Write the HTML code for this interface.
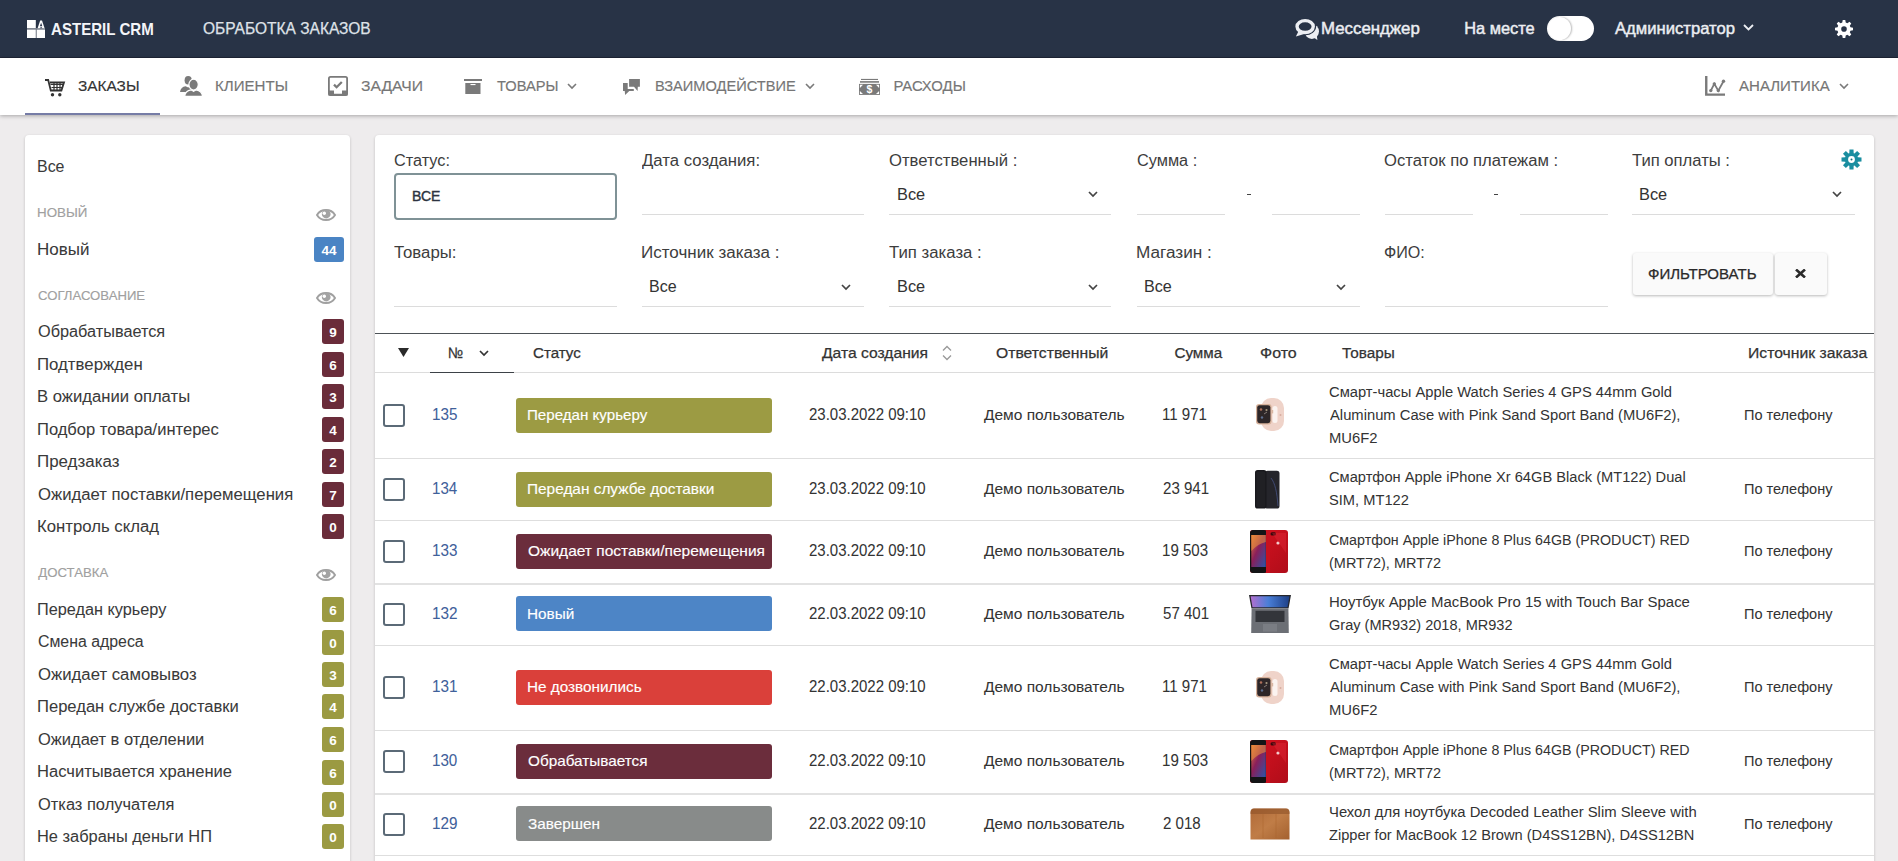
<!DOCTYPE html>
<html><head><meta charset="utf-8"><title>Asteril CRM</title>
<style>
html,body{margin:0;padding:0;}
body{width:1898px;height:861px;overflow:hidden;position:relative;background:#eeeced;font-family:"Liberation Sans", sans-serif;}
.t{position:absolute;white-space:nowrap;}
svg{display:block}
</style></head><body>
<div style="position:absolute;left:0px;top:0px;width:1898px;height:58px;background:#283346;border-bottom:1px solid #1f2536;box-sizing:border-box"></div>
<svg style="position:absolute;left:27px;top:20px" width="18" height="18" viewBox="0 0 18 18"><rect x="0" y="0" width="8.8" height="8.2" fill="#fff"/><rect x="0" y="8.2" width="18" height="1.4" fill="#8d929c"/><rect x="8.8" y="9.6" width="1" height="8.4" fill="#8d929c"/><rect x="0" y="9.6" width="8.8" height="8.4" fill="#fff"/><rect x="9.8" y="9.6" width="8.2" height="8.4" fill="#fff"/><path d="M10.6 8.2 L13.2 0.6 L15.0 0.6 L17.6 8.2 Z" fill="#fff"/><path d="M14.1 2.8 L12.9 6.2 L15.3 6.2 Z M12.6 8.2 L14.1 6.9 L15.6 8.2Z" fill="#283249"/></svg>
<div class="t" style="left:51.22px;top:19.22px;font-size:16.40px;line-height:20px;font-weight:700;color:#f4f5f8;transform:scaleX(0.9201);transform-origin:0 0;">ASTERIL CRM</div>
<div class="t" style="left:202.90px;top:19.03px;font-size:15.80px;line-height:20px;font-weight:400;color:#dfe2e8;transform:scaleX(0.9822);transform-origin:0 0;-webkit-text-stroke:0.25px #dfe2e8;">ОБРАБОТКА ЗАКАЗОВ</div>
<svg style="position:absolute;left:1295px;top:18px" width="25" height="23" viewBox="0 0 25 23"><ellipse cx="16.8" cy="13.6" rx="7.2" ry="7.4" fill="#eceef2"/><path d="M18 19L22.4 22L21.6 15.5Z" fill="#eceef2"/><ellipse cx="10.15" cy="8.55" rx="11.0" ry="8.75" fill="#283346"/><ellipse cx="10.15" cy="8.55" rx="8.1" ry="5.95" fill="#283346" stroke="#eceef2" stroke-width="3.4"/><path d="M3.4 13.4L0.9 18.6L9.2 15.9Z" fill="#eceef2"/></svg>
<div class="t" style="left:1321.15px;top:18.12px;font-size:16.40px;line-height:20px;font-weight:400;color:#eceef2;transform:scaleX(1.0267);transform-origin:0 0;-webkit-text-stroke:0.45px #eceef2;">Мессенджер</div>
<div class="t" style="left:1464.19px;top:18.12px;font-size:16.40px;line-height:20px;font-weight:400;color:#eceef2;-webkit-text-stroke:0.45px #eceef2;">На месте</div>
<div style="position:absolute;left:1547px;top:16px;width:47px;height:25px;background:#fff;border-radius:13px"></div>
<div style="position:absolute;left:1548px;top:17px;width:23px;height:23px;background:#fff;border-radius:50%;box-shadow:1px 0 2px rgba(0,0,0,.28)"></div>
<div class="t" style="left:1614.60px;top:18.12px;font-size:16.40px;line-height:20px;font-weight:400;color:#eceef2;transform:scaleX(1.0147);transform-origin:0 0;-webkit-text-stroke:0.45px #eceef2;">Администратор</div>
<svg style="position:absolute;left:1743px;top:24px" width="11" height="7" viewBox="0 0 11 7"><path d="M1 1l4.5 4.5L10 1" fill="none" stroke="#eceef2" stroke-width="1.8"/></svg>
<svg style="position:absolute;left:1834px;top:19px" width="20" height="20" viewBox="0 0 20 20"><path d="M8.27 3.53 L8.73 0.99 L11.27 0.99 L11.73 3.53 L13.35 4.20 L15.48 2.73 L17.27 4.52 L15.80 6.65 L16.47 8.27 L19.01 8.73 L19.01 11.27 L16.47 11.73 L15.80 13.35 L17.27 15.48 L15.48 17.27 L13.35 15.80 L11.73 16.47 L11.27 19.01 L8.73 19.01 L8.27 16.47 L6.65 15.80 L4.52 17.27 L2.73 15.48 L4.20 13.35 L3.53 11.73 L0.99 11.27 L0.99 8.73 L3.53 8.27 L4.20 6.65 L2.73 4.52 L4.52 2.73 L6.65 4.20Z M7.20 10.00a2.8 2.8 0 1 0 5.60 0a2.8 2.8 0 1 0 -5.60 0Z" fill="#fff" fill-rule="evenodd"/></svg>
<div style="position:absolute;left:0px;top:58px;width:1898px;height:57px;background:#fff;box-shadow:0 1px 4px rgba(0,0,0,.3)"></div>
<div style="position:absolute;left:25px;top:113px;width:135px;height:2px;background:#767ca6"></div>
<svg style="position:absolute;left:45px;top:79px" width="21" height="18" viewBox="0 0 21 18"><path d="M0 1h3.2l2.6 10.5h10.6l2.6-8H5" fill="none" stroke="#333" stroke-width="1.8"/><path d="M5.5 5.5h13M6.5 8.5h11M9 3.5v8M12 3.5v8M15 3.5v8" stroke="#333" stroke-width="1.2"/><circle cx="7.5" cy="15.8" r="1.7" fill="#333"/><circle cx="14.8" cy="15.8" r="1.7" fill="#333"/></svg>
<div class="t" style="left:78.46px;top:77.14px;font-size:14.90px;line-height:19px;font-weight:400;color:#333;transform:scaleX(1.0331);transform-origin:0 0;-webkit-text-stroke:0.15px #333;">ЗАКАЗЫ</div>
<svg style="position:absolute;left:179px;top:75px" width="24" height="22" viewBox="0 0 24 22"><ellipse cx="9.2" cy="5.2" rx="3.6" ry="4.3" fill="#7a7a7a"/><path d="M1 17c.4-3.6 2.6-5.3 5.6-5.8l2.6 1.4 2.4-1.3c1 .2 1.8.5 2.4.9L10 17z" fill="#7a7a7a"/><ellipse cx="14.6" cy="9.6" rx="4.7" ry="5.4" fill="#7a7a7a" stroke="#fff" stroke-width="1.2"/><path d="M5.6 21.4c.5-4.2 3-6 6.4-6.6l2.6 1.6 2.6-1.6c3.4.6 5.9 2.4 6.4 6.6z" fill="#7a7a7a" stroke="#fff" stroke-width="1.2"/></svg>
<div class="t" style="left:215.09px;top:77.14px;font-size:14.90px;line-height:19px;font-weight:400;color:#767676;transform:scaleX(1.0128);transform-origin:0 0;-webkit-text-stroke:0.15px #767676;">КЛИЕНТЫ</div>
<svg style="position:absolute;left:328px;top:76px" width="20" height="20" viewBox="0 0 20 20"><rect x="0.9" y="0.9" width="18.2" height="18.2" rx="1.6" fill="none" stroke="#7a7a7a" stroke-width="1.8"/><path d="M0.5 14.6H6v3.2h8v-3.2h5.5V19.5H0.5z" fill="#7a7a7a"/><path d="M6 8.6l2.6 2.6 5.2-5.2" fill="none" stroke="#7a7a7a" stroke-width="2.3"/></svg>
<div class="t" style="left:361.25px;top:77.14px;font-size:14.90px;line-height:19px;font-weight:400;color:#767676;transform:scaleX(1.0522);transform-origin:0 0;-webkit-text-stroke:0.15px #767676;">ЗАДАЧИ</div>
<svg style="position:absolute;left:464px;top:79px" width="18" height="15" viewBox="0 0 18 15"><rect x="0" y="0" width="18" height="2" fill="#7a7a7a"/><rect x="1.3" y="4" width="15.2" height="11" fill="#7a7a7a"/><rect x="6.5" y="5" width="5" height="1.1" fill="#fff"/></svg>
<div class="t" style="left:496.71px;top:77.14px;font-size:14.90px;line-height:19px;font-weight:400;color:#767676;transform:scaleX(0.9834);transform-origin:0 0;-webkit-text-stroke:0.15px #767676;">ТОВАРЫ</div>
<svg style="position:absolute;left:567px;top:83px" width="10" height="7" viewBox="0 0 10 7"><path d="M1 1l4 4 4-4" fill="none" stroke="#7a7a7a" stroke-width="1.6"/></svg>
<svg style="position:absolute;left:622px;top:78px" width="19" height="17" viewBox="0 0 19 17"><path d="M7.1 1.06H17.9V8.7H15.8L15.6 12.9L12 8.7H7.1Z" fill="#7a7a7a"/><path d="M1 5H5.7V11H11.8V12.9H7.3L3.1 16.9L2.75 12.9H1Z" fill="#7a7a7a"/></svg>
<div class="t" style="left:654.63px;top:77.14px;font-size:14.90px;line-height:19px;font-weight:400;color:#767676;transform:scaleX(0.9815);transform-origin:0 0;-webkit-text-stroke:0.15px #767676;">ВЗАИМОДЕЙСТВИЕ</div>
<svg style="position:absolute;left:805px;top:83px" width="10" height="7" viewBox="0 0 10 7"><path d="M1 1l4 4 4-4" fill="none" stroke="#7a7a7a" stroke-width="1.6"/></svg>
<svg style="position:absolute;left:858px;top:78px" width="22" height="17" viewBox="0 0 22 17"><rect x="3" y="0.9" width="17" height="1.1" fill="#7a7a7a"/><rect x="2" y="3.1" width="19" height="1.6" fill="#7a7a7a"/><rect x="1" y="5.9" width="21" height="11" fill="#7a7a7a"/><path d="M1.9 6.8H5L1.9 9.9ZM21.1 6.8H18L21.1 9.9ZM1.9 16H5L1.9 12.9ZM21.1 16H18L21.1 12.9Z" fill="#fff"/><text x="11.5" y="15.3" font-size="10.5" font-weight="700" text-anchor="middle" fill="#fff" font-family="Liberation Sans">$</text></svg>
<div class="t" style="left:893.41px;top:77.14px;font-size:14.90px;line-height:19px;font-weight:400;color:#767676;-webkit-text-stroke:0.15px #767676;">РАСХОДЫ</div>
<svg style="position:absolute;left:1705px;top:75px" width="21" height="21" viewBox="0 0 21 21"><path d="M1.25 1V19.6H20" fill="none" stroke="#7a7a7a" stroke-width="2.4"/><path d="M5.8 15.6L9.3 8.9L13.3 15.6L18.5 6.3" fill="none" stroke="#7a7a7a" stroke-width="1.8"/><circle cx="5.8" cy="15.6" r="1.7" fill="#7a7a7a"/><circle cx="9.3" cy="8.9" r="1.7" fill="#7a7a7a"/><circle cx="13.3" cy="15.6" r="1.7" fill="#7a7a7a"/><circle cx="18.5" cy="6.3" r="1.7" fill="#7a7a7a"/></svg>
<div class="t" style="left:1739.00px;top:77.14px;font-size:14.90px;line-height:19px;font-weight:400;color:#767676;transform:scaleX(1.0095);transform-origin:0 0;-webkit-text-stroke:0.15px #767676;">АНАЛИТИКА</div>
<svg style="position:absolute;left:1839px;top:83px" width="10" height="7" viewBox="0 0 10 7"><path d="M1 1l4 4 4-4" fill="none" stroke="#7a7a7a" stroke-width="1.6"/></svg>
<div style="position:absolute;left:25px;top:135px;width:325px;height:760px;background:#fff;border-radius:4px;box-shadow:0 1px 3px rgba(0,0,0,.2)"></div>
<div class="t" style="left:37.12px;top:156.93px;font-size:15.80px;line-height:20px;font-weight:400;color:#3a3a3a;transform:scaleX(1.0087);transform-origin:0 0;-webkit-text-stroke:0.05px #3a3a3a;">Все</div>
<div class="t" style="left:37.33px;top:204.83px;font-size:13.20px;line-height:16px;font-weight:400;color:#a0a0a0;transform:scaleX(1.0115);transform-origin:0 0;-webkit-text-stroke:0.15px #a0a0a0;">НОВЫЙ</div>
<svg style="position:absolute;left:316px;top:209.0px" width="20" height="12" viewBox="0 0 20 12"><path d="M1 6C3.2 2.2 6.4 1 10 1s6.8 1.2 9 5c-2.2 3.8-5.4 5-9 5s-6.8-1.2-9-5z" fill="#fff" stroke="#a0a0a0" stroke-width="1.9"/><circle cx="10.2" cy="5.0" r="4.4" fill="#a3a3a3"/><circle cx="8.3" cy="4.3" r="1.7" fill="#fff"/></svg>
<div class="t" style="left:37.74px;top:287.63px;font-size:13.20px;line-height:16px;font-weight:400;color:#a0a0a0;transform:scaleX(0.9963);transform-origin:0 0;-webkit-text-stroke:0.15px #a0a0a0;">СОГЛАСОВАНИЕ</div>
<svg style="position:absolute;left:316px;top:291.8px" width="20" height="12" viewBox="0 0 20 12"><path d="M1 6C3.2 2.2 6.4 1 10 1s6.8 1.2 9 5c-2.2 3.8-5.4 5-9 5s-6.8-1.2-9-5z" fill="#fff" stroke="#a0a0a0" stroke-width="1.9"/><circle cx="10.2" cy="5.0" r="4.4" fill="#a3a3a3"/><circle cx="8.3" cy="4.3" r="1.7" fill="#fff"/></svg>
<div class="t" style="left:38.33px;top:564.73px;font-size:13.20px;line-height:16px;font-weight:400;color:#a0a0a0;-webkit-text-stroke:0.15px #a0a0a0;">ДОСТАВКА</div>
<svg style="position:absolute;left:316px;top:568.9px" width="20" height="12" viewBox="0 0 20 12"><path d="M1 6C3.2 2.2 6.4 1 10 1s6.8 1.2 9 5c-2.2 3.8-5.4 5-9 5s-6.8-1.2-9-5z" fill="#fff" stroke="#a0a0a0" stroke-width="1.9"/><circle cx="10.2" cy="5.0" r="4.4" fill="#a3a3a3"/><circle cx="8.3" cy="4.3" r="1.7" fill="#fff"/></svg>
<div class="t" style="left:37.04px;top:239.83px;font-size:15.80px;line-height:20px;font-weight:400;color:#3a3a3a;transform:scaleX(1.0742);transform-origin:0 0;-webkit-text-stroke:0.05px #3a3a3a;">Новый</div>
<div style="position:absolute;left:314px;top:237px;width:30px;height:25px;background:#4a84c4;border-radius:3px"></div>
<div class="t" style="left:314px;top:237.6px;width:30px;height:25px;line-height:25px;text-align:center;font-size:13.5px;font-weight:700;color:#fff">44</div>
<div class="t" style="left:37.67px;top:322.03px;font-size:15.80px;line-height:20px;font-weight:400;color:#3a3a3a;transform:scaleX(1.0307);transform-origin:0 0;-webkit-text-stroke:0.05px #3a3a3a;">Обрабатывается</div>
<div style="position:absolute;left:322px;top:319px;width:22px;height:25px;background:#6a2c3a;border-radius:3px"></div>
<div class="t" style="left:322px;top:319.6px;width:22px;height:25px;line-height:25px;text-align:center;font-size:13.5px;font-weight:700;color:#fff">9</div>
<div class="t" style="left:37.06px;top:354.53px;font-size:15.80px;line-height:20px;font-weight:400;color:#3a3a3a;transform:scaleX(1.0638);transform-origin:0 0;-webkit-text-stroke:0.05px #3a3a3a;">Подтвержден</div>
<div style="position:absolute;left:322px;top:352px;width:22px;height:25px;background:#6a2c3a;border-radius:3px"></div>
<div class="t" style="left:322px;top:352.6px;width:22px;height:25px;line-height:25px;text-align:center;font-size:13.5px;font-weight:700;color:#fff">6</div>
<div class="t" style="left:37.07px;top:387.03px;font-size:15.80px;line-height:20px;font-weight:400;color:#3a3a3a;transform:scaleX(1.0539);transform-origin:0 0;-webkit-text-stroke:0.05px #3a3a3a;">В ожидании оплаты</div>
<div style="position:absolute;left:322px;top:384px;width:22px;height:25px;background:#6a2c3a;border-radius:3px"></div>
<div class="t" style="left:322px;top:384.6px;width:22px;height:25px;line-height:25px;text-align:center;font-size:13.5px;font-weight:700;color:#fff">3</div>
<div class="t" style="left:37.08px;top:419.53px;font-size:15.80px;line-height:20px;font-weight:400;color:#3a3a3a;transform:scaleX(1.0467);transform-origin:0 0;-webkit-text-stroke:0.05px #3a3a3a;">Подбор товара/интерес</div>
<div style="position:absolute;left:322px;top:417px;width:22px;height:25px;background:#6a2c3a;border-radius:3px"></div>
<div class="t" style="left:322px;top:417.6px;width:22px;height:25px;line-height:25px;text-align:center;font-size:13.5px;font-weight:700;color:#fff">4</div>
<div class="t" style="left:37.05px;top:452.03px;font-size:15.80px;line-height:20px;font-weight:400;color:#3a3a3a;transform:scaleX(1.0713);transform-origin:0 0;-webkit-text-stroke:0.05px #3a3a3a;">Предзаказ</div>
<div style="position:absolute;left:322px;top:449px;width:22px;height:25px;background:#6a2c3a;border-radius:3px"></div>
<div class="t" style="left:322px;top:449.6px;width:22px;height:25px;line-height:25px;text-align:center;font-size:13.5px;font-weight:700;color:#fff">2</div>
<div class="t" style="left:37.65px;top:484.53px;font-size:15.80px;line-height:20px;font-weight:400;color:#3a3a3a;transform:scaleX(1.0572);transform-origin:0 0;-webkit-text-stroke:0.05px #3a3a3a;">Ожидает поставки/перемещения</div>
<div style="position:absolute;left:322px;top:482px;width:22px;height:25px;background:#6a2c3a;border-radius:3px"></div>
<div class="t" style="left:322px;top:482.6px;width:22px;height:25px;line-height:25px;text-align:center;font-size:13.5px;font-weight:700;color:#fff">7</div>
<div class="t" style="left:37.06px;top:517.03px;font-size:15.80px;line-height:20px;font-weight:400;color:#3a3a3a;transform:scaleX(1.0584);transform-origin:0 0;-webkit-text-stroke:0.05px #3a3a3a;">Контроль склад</div>
<div style="position:absolute;left:322px;top:514px;width:22px;height:25px;background:#6a2c3a;border-radius:3px"></div>
<div class="t" style="left:322px;top:514.6px;width:22px;height:25px;line-height:25px;text-align:center;font-size:13.5px;font-weight:700;color:#fff">0</div>
<div class="t" style="left:37.10px;top:599.83px;font-size:15.80px;line-height:20px;font-weight:400;color:#3a3a3a;transform:scaleX(1.0294);transform-origin:0 0;-webkit-text-stroke:0.05px #3a3a3a;">Передан курьеру</div>
<div style="position:absolute;left:322px;top:597px;width:22px;height:25px;background:#9b9a42;border-radius:3px"></div>
<div class="t" style="left:322px;top:597.6px;width:22px;height:25px;line-height:25px;text-align:center;font-size:13.5px;font-weight:700;color:#fff">6</div>
<div class="t" style="left:37.61px;top:632.33px;font-size:15.80px;line-height:20px;font-weight:400;color:#3a3a3a;transform:scaleX(1.0044);transform-origin:0 0;-webkit-text-stroke:0.05px #3a3a3a;">Смена адреса</div>
<div style="position:absolute;left:322px;top:630px;width:22px;height:25px;background:#9b9a42;border-radius:3px"></div>
<div class="t" style="left:322px;top:630.6px;width:22px;height:25px;line-height:25px;text-align:center;font-size:13.5px;font-weight:700;color:#fff">0</div>
<div class="t" style="left:37.65px;top:664.83px;font-size:15.80px;line-height:20px;font-weight:400;color:#3a3a3a;transform:scaleX(1.0597);transform-origin:0 0;-webkit-text-stroke:0.05px #3a3a3a;">Ожидает самовывоз</div>
<div style="position:absolute;left:322px;top:662px;width:22px;height:25px;background:#9b9a42;border-radius:3px"></div>
<div class="t" style="left:322px;top:662.6px;width:22px;height:25px;line-height:25px;text-align:center;font-size:13.5px;font-weight:700;color:#fff">3</div>
<div class="t" style="left:37.07px;top:697.33px;font-size:15.80px;line-height:20px;font-weight:400;color:#3a3a3a;transform:scaleX(1.0495);transform-origin:0 0;-webkit-text-stroke:0.05px #3a3a3a;">Передан службе доставки</div>
<div style="position:absolute;left:322px;top:694px;width:22px;height:25px;background:#9b9a42;border-radius:3px"></div>
<div class="t" style="left:322px;top:694.6px;width:22px;height:25px;line-height:25px;text-align:center;font-size:13.5px;font-weight:700;color:#fff">4</div>
<div class="t" style="left:37.66px;top:729.83px;font-size:15.80px;line-height:20px;font-weight:400;color:#3a3a3a;transform:scaleX(1.0437);transform-origin:0 0;-webkit-text-stroke:0.05px #3a3a3a;">Ожидает в отделении</div>
<div style="position:absolute;left:322px;top:727px;width:22px;height:25px;background:#9b9a42;border-radius:3px"></div>
<div class="t" style="left:322px;top:727.6px;width:22px;height:25px;line-height:25px;text-align:center;font-size:13.5px;font-weight:700;color:#fff">6</div>
<div class="t" style="left:37.08px;top:762.33px;font-size:15.80px;line-height:20px;font-weight:400;color:#3a3a3a;transform:scaleX(1.0481);transform-origin:0 0;-webkit-text-stroke:0.05px #3a3a3a;">Насчитывается хранение</div>
<div style="position:absolute;left:322px;top:760px;width:22px;height:25px;background:#9b9a42;border-radius:3px"></div>
<div class="t" style="left:322px;top:760.6px;width:22px;height:25px;line-height:25px;text-align:center;font-size:13.5px;font-weight:700;color:#fff">6</div>
<div class="t" style="left:37.66px;top:794.83px;font-size:15.80px;line-height:20px;font-weight:400;color:#3a3a3a;transform:scaleX(1.0413);transform-origin:0 0;-webkit-text-stroke:0.05px #3a3a3a;">Отказ получателя</div>
<div style="position:absolute;left:322px;top:792px;width:22px;height:25px;background:#9b9a42;border-radius:3px"></div>
<div class="t" style="left:322px;top:792.6px;width:22px;height:25px;line-height:25px;text-align:center;font-size:13.5px;font-weight:700;color:#fff">0</div>
<div class="t" style="left:37.09px;top:827.33px;font-size:15.80px;line-height:20px;font-weight:400;color:#3a3a3a;transform:scaleX(1.0392);transform-origin:0 0;-webkit-text-stroke:0.05px #3a3a3a;">Не забраны деньги НП</div>
<div style="position:absolute;left:322px;top:824px;width:22px;height:25px;background:#9b9a42;border-radius:3px"></div>
<div class="t" style="left:322px;top:824.6px;width:22px;height:25px;line-height:25px;text-align:center;font-size:13.5px;font-weight:700;color:#fff">0</div>
<div style="position:absolute;left:375px;top:135px;width:1499px;height:760px;background:#fff;border-radius:4px;box-shadow:0 1px 3px rgba(0,0,0,.2)"></div>
<div class="t" style="left:393.79px;top:150.83px;font-size:15.80px;line-height:20px;font-weight:400;color:#3d3d3d;transform:scaleX(1.0299);transform-origin:0 0;">Статус:</div>
<div style="position:absolute;left:394px;top:173px;width:223px;height:47px;box-sizing:border-box;border:2px solid #7f9296;border-radius:4px"></div>
<div class="t" style="left:412.18px;top:186.58px;font-size:14.20px;line-height:18px;font-weight:400;color:#2c3340;transform:scaleX(0.9896);transform-origin:0 0;-webkit-text-stroke:0.4px #2c3340;">ВСЕ</div>
<div class="t" style="left:641.92px;top:151.33px;font-size:15.80px;line-height:20px;font-weight:400;color:#3d3d3d;transform:scaleX(1.0594);transform-origin:0 0;">Дата создания:</div>
<div style="position:absolute;left:642px;top:214px;width:222px;height:1px;background:#dcdcdc"></div>
<div class="t" style="left:889.05px;top:151.33px;font-size:15.80px;line-height:20px;font-weight:400;color:#3d3d3d;transform:scaleX(1.0558);transform-origin:0 0;">Ответственный :</div>
<div class="t" style="left:896.50px;top:184.99px;font-size:15.60px;line-height:20px;font-weight:400;color:#333;transform:scaleX(1.0457);transform-origin:0 0;-webkit-text-stroke:0.05px #333;">Все</div>
<svg style="position:absolute;left:1088px;top:191px" width="10" height="7" viewBox="0 0 10 7"><path d="M1 1l4 4 4-4" fill="none" stroke="#444" stroke-width="1.7"/></svg>
<div style="position:absolute;left:889px;top:214px;width:222px;height:1px;background:#dcdcdc"></div>
<div class="t" style="left:1136.69px;top:151.33px;font-size:15.80px;line-height:20px;font-weight:400;color:#3d3d3d;transform:scaleX(1.0311);transform-origin:0 0;">Сумма :</div>
<div style="position:absolute;left:1137px;top:214px;width:88px;height:1px;background:#dcdcdc"></div>
<div style="position:absolute;left:1272px;top:214px;width:88px;height:1px;background:#dcdcdc"></div>
<div style="position:absolute;left:1247px;top:194px;width:4px;height:1px;background:#444"></div>
<div class="t" style="left:1384.45px;top:151.33px;font-size:15.80px;line-height:20px;font-weight:400;color:#3d3d3d;transform:scaleX(1.0528);transform-origin:0 0;">Остаток по платежам :</div>
<div style="position:absolute;left:1385px;top:214px;width:88px;height:1px;background:#dcdcdc"></div>
<div style="position:absolute;left:1520px;top:214px;width:88px;height:1px;background:#dcdcdc"></div>
<div style="position:absolute;left:1494px;top:194px;width:4px;height:1px;background:#444"></div>
<div class="t" style="left:1632.47px;top:151.33px;font-size:15.80px;line-height:20px;font-weight:400;color:#3d3d3d;transform:scaleX(1.0525);transform-origin:0 0;">Тип оплаты :</div>
<div class="t" style="left:1639.39px;top:184.99px;font-size:15.60px;line-height:20px;font-weight:400;color:#333;transform:scaleX(1.0457);transform-origin:0 0;-webkit-text-stroke:0.05px #333;">Все</div>
<svg style="position:absolute;left:1832px;top:191px" width="10" height="7" viewBox="0 0 10 7"><path d="M1 1l4 4 4-4" fill="none" stroke="#444" stroke-width="1.7"/></svg>
<div style="position:absolute;left:1632px;top:214px;width:223px;height:1px;background:#dcdcdc"></div>
<svg style="position:absolute;left:1841px;top:149px" width="21" height="21" viewBox="0 0 21 21"><path d="M8.32 4.17 L8.47 0.50 L12.53 0.50 L12.68 4.17 L13.44 4.48 L16.13 1.99 L19.01 4.87 L16.52 7.56 L16.83 8.32 L20.50 8.47 L20.50 12.53 L16.83 12.68 L16.52 13.44 L19.01 16.13 L16.13 19.01 L13.44 16.52 L12.68 16.83 L12.53 20.50 L8.47 20.50 L8.32 16.83 L7.56 16.52 L4.87 19.01 L1.99 16.13 L4.48 13.44 L4.17 12.68 L0.50 12.53 L0.50 8.47 L4.17 8.32 L4.48 7.56 L1.99 4.87 L4.87 1.99 L7.56 4.48Z M7.10 10.50a3.4 3.4 0 1 0 6.80 0a3.4 3.4 0 1 0 -6.80 0Z" fill="#1a8ea0" fill-rule="evenodd"/><circle cx="10.5" cy="10.5" r="1" fill="#1a6f7c"/></svg>
<div class="t" style="left:394.26px;top:242.53px;font-size:15.80px;line-height:20px;font-weight:400;color:#3d3d3d;transform:scaleX(1.0642);transform-origin:0 0;">Товары:</div>
<div style="position:absolute;left:394px;top:306px;width:223px;height:1px;background:#dcdcdc"></div>
<div class="t" style="left:640.64px;top:242.53px;font-size:15.80px;line-height:20px;font-weight:400;color:#3d3d3d;transform:scaleX(1.0776);transform-origin:0 0;">Источник заказа :</div>
<div class="t" style="left:648.72px;top:276.89px;font-size:15.60px;line-height:20px;font-weight:400;color:#333;transform:scaleX(1.0256);transform-origin:0 0;-webkit-text-stroke:0.05px #333;">Все</div>
<svg style="position:absolute;left:841px;top:284px" width="10" height="7" viewBox="0 0 10 7"><path d="M1 1l4 4 4-4" fill="none" stroke="#444" stroke-width="1.7"/></svg>
<div style="position:absolute;left:642px;top:306px;width:222px;height:1px;background:#dcdcdc"></div>
<div class="t" style="left:889.46px;top:242.53px;font-size:15.80px;line-height:20px;font-weight:400;color:#3d3d3d;transform:scaleX(1.0605);transform-origin:0 0;">Тип заказа :</div>
<div class="t" style="left:896.50px;top:276.89px;font-size:15.60px;line-height:20px;font-weight:400;color:#333;transform:scaleX(1.0457);transform-origin:0 0;-webkit-text-stroke:0.05px #333;">Все</div>
<svg style="position:absolute;left:1088px;top:284px" width="10" height="7" viewBox="0 0 10 7"><path d="M1 1l4 4 4-4" fill="none" stroke="#444" stroke-width="1.7"/></svg>
<div style="position:absolute;left:889px;top:306px;width:222px;height:1px;background:#dcdcdc"></div>
<div class="t" style="left:1135.82px;top:242.73px;font-size:15.80px;line-height:20px;font-weight:400;color:#3d3d3d;transform:scaleX(1.0884);transform-origin:0 0;">Магазин :</div>
<div class="t" style="left:1144.11px;top:276.89px;font-size:15.60px;line-height:20px;font-weight:400;color:#333;transform:scaleX(1.0337);transform-origin:0 0;-webkit-text-stroke:0.05px #333;">Все</div>
<svg style="position:absolute;left:1336px;top:284px" width="10" height="7" viewBox="0 0 10 7"><path d="M1 1l4 4 4-4" fill="none" stroke="#444" stroke-width="1.7"/></svg>
<div style="position:absolute;left:1137px;top:306px;width:223px;height:1px;background:#dcdcdc"></div>
<div class="t" style="left:1384.31px;top:242.53px;font-size:15.80px;line-height:20px;font-weight:400;color:#3d3d3d;transform:scaleX(1.0195);transform-origin:0 0;">ФИО:</div>
<div style="position:absolute;left:1385px;top:306px;width:223px;height:1px;background:#dcdcdc"></div>
<div style="position:absolute;left:1633px;top:253px;width:140px;height:42px;background:#fafafa;border-radius:3px;box-shadow:0 1px 3px rgba(0,0,0,.28)"></div>
<div class="t" style="left:1648.37px;top:264.61px;font-size:14.40px;line-height:18px;font-weight:400;color:#2a2a2a;transform:scaleX(1.0451);transform-origin:0 0;-webkit-text-stroke:0.25px #2a2a2a;">ФИЛЬТРОВАТЬ</div>
<div style="position:absolute;left:1775px;top:253px;width:52px;height:42px;background:#fafafa;border-radius:3px;box-shadow:0 1px 3px rgba(0,0,0,.28)"></div>
<svg style="position:absolute;left:1795px;top:269px" width="11" height="9" viewBox="0 0 11 9"><path d="M1 0.5l9 8M10 0.5l-9 8" stroke="#2a2a2a" stroke-width="2.6"/></svg>
<div style="position:absolute;left:375px;top:333px;width:1499px;height:1px;background:#4d5257"></div>
<div style="position:absolute;left:375px;top:372px;width:1499px;height:1px;background:#dcdcdc"></div>
<div style="position:absolute;left:430px;top:372px;width:84px;height:1px;background:#3d4247"></div>
<svg style="position:absolute;left:398px;top:348px" width="11" height="9" viewBox="0 0 11 9"><path d="M0 0h11L5.5 9z" fill="#2a2a2a"/></svg>
<div class="t" style="left:448.41px;top:343.13px;font-size:15.20px;line-height:19px;font-weight:400;color:#333;transform:scaleX(0.9429);transform-origin:0 0;-webkit-text-stroke:0.25px #333;">№</div>
<svg style="position:absolute;left:479px;top:350px" width="10" height="7" viewBox="0 0 10 7"><path d="M1 1l4 4 4-4" fill="none" stroke="#333" stroke-width="1.7"/></svg>
<div class="t" style="left:532.54px;top:343.43px;font-size:15.20px;line-height:19px;font-weight:400;color:#333;transform:scaleX(0.9959);transform-origin:0 0;-webkit-text-stroke:0.25px #333;">Статус</div>
<div class="t" style="left:821.92px;top:343.43px;font-size:15.20px;line-height:19px;font-weight:400;color:#333;transform:scaleX(1.0303);transform-origin:0 0;-webkit-text-stroke:0.25px #333;">Дата создания</div>
<svg style="position:absolute;left:942px;top:345px" width="10" height="16" viewBox="0 0 10 16"><path d="M1 5.5l4-4 4 4M1 10.5l4 4 4-4" fill="none" stroke="#999" stroke-width="1.3"/></svg>
<div class="t" style="left:996.09px;top:343.43px;font-size:15.20px;line-height:19px;font-weight:400;color:#333;transform:scaleX(1.0350);transform-origin:0 0;-webkit-text-stroke:0.25px #333;">Ответственный</div>
<div class="t" style="left:1174.44px;top:343.43px;font-size:15.20px;line-height:19px;font-weight:400;color:#333;-webkit-text-stroke:0.25px #333;">Сумма</div>
<div class="t" style="left:1259.62px;top:343.43px;font-size:15.20px;line-height:19px;font-weight:400;color:#333;transform:scaleX(1.0526);transform-origin:0 0;-webkit-text-stroke:0.25px #333;">Фото</div>
<div class="t" style="left:1342.09px;top:343.43px;font-size:15.20px;line-height:19px;font-weight:400;color:#333;transform:scaleX(1.0094);transform-origin:0 0;-webkit-text-stroke:0.25px #333;">Товары</div>
<div class="t" style="left:1747.74px;top:343.43px;font-size:15.20px;line-height:19px;font-weight:400;color:#333;transform:scaleX(1.0351);transform-origin:0 0;-webkit-text-stroke:0.25px #333;">Источник заказа</div>
<svg width="0" height="0" style="position:absolute"><defs><linearGradient id="gw" x1="0" y1="0" x2="1" y2="1"><stop offset="0" stop-color="#e8793a"/><stop offset=".45" stop-color="#8a1f5a"/><stop offset="1" stop-color="#2a55a8"/></linearGradient><linearGradient id="gm" x1="0" y1="0" x2="1" y2="0"><stop offset="0" stop-color="#b36fd0"/><stop offset=".45" stop-color="#4a7fd8"/><stop offset="1" stop-color="#1d3f86"/></linearGradient><linearGradient id="gs" x1="0" y1="0" x2="1" y2="1"><stop offset="0" stop-color="#b06a38"/><stop offset=".5" stop-color="#c07d47"/><stop offset="1" stop-color="#a4612f"/></linearGradient><linearGradient id="gr" x1="0" y1="0" x2="1" y2="1"><stop offset="0" stop-color="#d8121f"/><stop offset="1" stop-color="#b00d1a"/></linearGradient></defs></svg>
<div style="position:absolute;left:375px;top:458px;width:1499px;height:1px;background:#dedede"></div>
<div style="position:absolute;left:383px;top:404px;width:22px;height:23px;box-sizing:border-box;border:2px solid #5b6a77;border-radius:3px"></div>
<div class="t" style="left:431.66px;top:403.82px;font-size:16.40px;line-height:20px;font-weight:400;color:#40609a;transform:scaleX(0.9284);transform-origin:0 0;-webkit-text-stroke:0.05px #40609a;">135</div>
<div style="position:absolute;left:516px;top:398px;width:256px;height:35px;background:#9c9b43;border-radius:3px"></div>
<div class="t" style="left:527.39px;top:404.80px;font-size:15.00px;line-height:19px;font-weight:400;color:#fff;transform:scaleX(1.0080);transform-origin:0 0;-webkit-text-stroke:0.15px #fff;">Передан курьеру</div>
<div class="t" style="left:808.85px;top:403.82px;font-size:16.40px;line-height:20px;font-weight:400;color:#333;transform:scaleX(0.9146);transform-origin:0 0;-webkit-text-stroke:0.05px #333;">23.03.2022 09:10</div>
<div class="t" style="left:984.02px;top:404.73px;font-size:15.20px;line-height:19px;font-weight:400;color:#333;transform:scaleX(1.0204);transform-origin:0 0;-webkit-text-stroke:0.05px #333;">Демо пользователь</div>
<div class="t" style="left:1162.17px;top:403.82px;font-size:16.40px;line-height:20px;font-weight:400;color:#333;-webkit-text-stroke:0.05px #333;transform:scaleX(0.92);transform-origin:0 0;">11 971</div>
<svg style="position:absolute;left:1256px;top:398px" width="28" height="33" viewBox="0 0 28 33"><g><rect x="5" y="0" width="23" height="33" rx="10" fill="#efd3c9"/><rect x="16.5" y="8" width="5" height="17" rx="2.5" fill="#fbf3f0"/><rect x="0" y="6" width="15.6" height="20.4" rx="3.2" fill="#d6b19a"/><rect x="1.2" y="7.2" width="13.2" height="18" rx="2.4" fill="#2d2628"/><circle cx="5" cy="11.5" r="1.3" fill="#b0705a"/><circle cx="10.5" cy="12" r="1.1" fill="#a89a80"/><circle cx="6" cy="19.5" r="1.2" fill="#5d6f90"/><path d="M8 16l3-2" stroke="#9a8f8a" stroke-width=".8"/><rect x="15.6" y="12" width="1.6" height="3.4" fill="#d9b7a2"/><circle cx="24.5" cy="17" r="1" fill="#d8ada0"/></g></svg>
<div class="t" style="left:1329.16px;top:381.73px;font-size:15.20px;line-height:19px;font-weight:400;color:#333;transform:scaleX(0.9702);transform-origin:0 0;">Смарт-часы Apple Watch Series 4 GPS 44mm Gold</div>
<div class="t" style="left:1329.90px;top:404.73px;font-size:15.20px;line-height:19px;font-weight:400;color:#333;transform:scaleX(0.9722);transform-origin:0 0;">Aluminum Case with Pink Sand Sport Band (MU6F2),</div>
<div class="t" style="left:1328.71px;top:427.73px;font-size:15.20px;line-height:19px;font-weight:400;color:#333;transform:scaleX(0.9748);transform-origin:0 0;">MU6F2</div>
<div class="t" style="left:1743.54px;top:404.73px;font-size:15.20px;line-height:19px;font-weight:400;color:#333;transform:scaleX(0.9559);transform-origin:0 0;-webkit-text-stroke:0.05px #333;">По телефону</div>
<div style="position:absolute;left:375px;top:520px;width:1499px;height:1px;background:#dedede"></div>
<div style="position:absolute;left:383px;top:478px;width:22px;height:23px;box-sizing:border-box;border:2px solid #5b6a77;border-radius:3px"></div>
<div class="t" style="left:431.67px;top:477.82px;font-size:16.40px;line-height:20px;font-weight:400;color:#40609a;transform:scaleX(0.9195);transform-origin:0 0;-webkit-text-stroke:0.05px #40609a;">134</div>
<div style="position:absolute;left:516px;top:472px;width:256px;height:35px;background:#9c9b43;border-radius:3px"></div>
<div class="t" style="left:527.37px;top:478.80px;font-size:15.00px;line-height:19px;font-weight:400;color:#fff;transform:scaleX(1.0256);transform-origin:0 0;-webkit-text-stroke:0.15px #fff;">Передан службе доставки</div>
<div class="t" style="left:808.85px;top:477.82px;font-size:16.40px;line-height:20px;font-weight:400;color:#333;transform:scaleX(0.9146);transform-origin:0 0;-webkit-text-stroke:0.05px #333;">23.03.2022 09:10</div>
<div class="t" style="left:984.02px;top:478.73px;font-size:15.20px;line-height:19px;font-weight:400;color:#333;transform:scaleX(1.0204);transform-origin:0 0;-webkit-text-stroke:0.05px #333;">Демо пользователь</div>
<div class="t" style="left:1162.58px;top:477.82px;font-size:16.40px;line-height:20px;font-weight:400;color:#333;-webkit-text-stroke:0.05px #333;transform:scaleX(0.92);transform-origin:0 0;">23 941</div>
<svg style="position:absolute;left:1255px;top:470px" width="25" height="39" viewBox="0 0 25 39"><g><rect x="10" y="0.8" width="14.5" height="37.8" rx="2.6" fill="#25252b"/><path d="M16 8c4 5 6 14 7 28" stroke="#4a5890" stroke-width="1" fill="none" opacity=".7"/><rect x="0" y="0" width="11.5" height="38.6" rx="2.6" fill="#19191d"/><rect x="1.3" y="1.4" width="9" height="35.8" rx="1.8" fill="#202024"/></g></svg>
<div class="t" style="left:1329.17px;top:467.23px;font-size:15.20px;line-height:19px;font-weight:400;color:#333;transform:scaleX(0.9649);transform-origin:0 0;">Смартфон Apple iPhone Xr 64GB Black (MT122) Dual</div>
<div class="t" style="left:1329.24px;top:490.23px;font-size:15.20px;line-height:19px;font-weight:400;color:#333;transform:scaleX(0.9653);transform-origin:0 0;">SIM, MT122</div>
<div class="t" style="left:1743.54px;top:478.73px;font-size:15.20px;line-height:19px;font-weight:400;color:#333;transform:scaleX(0.9559);transform-origin:0 0;-webkit-text-stroke:0.05px #333;">По телефону</div>
<div style="position:absolute;left:375px;top:583px;width:1499px;height:2px;background:#e2e2e2"></div>
<div style="position:absolute;left:383px;top:540px;width:22px;height:23px;box-sizing:border-box;border:2px solid #5b6a77;border-radius:3px"></div>
<div class="t" style="left:431.66px;top:540.32px;font-size:16.40px;line-height:20px;font-weight:400;color:#40609a;transform:scaleX(0.9284);transform-origin:0 0;-webkit-text-stroke:0.05px #40609a;">133</div>
<div style="position:absolute;left:516px;top:534px;width:256px;height:35px;background:#6b2d3c;border-radius:3px"></div>
<div class="t" style="left:527.90px;top:541.30px;font-size:15.00px;line-height:19px;font-weight:400;color:#fff;transform:scaleX(1.0336);transform-origin:0 0;-webkit-text-stroke:0.15px #fff;">Ожидает поставки/перемещения</div>
<div class="t" style="left:808.85px;top:540.32px;font-size:16.40px;line-height:20px;font-weight:400;color:#333;transform:scaleX(0.9146);transform-origin:0 0;-webkit-text-stroke:0.05px #333;">23.03.2022 09:10</div>
<div class="t" style="left:984.02px;top:541.23px;font-size:15.20px;line-height:19px;font-weight:400;color:#333;transform:scaleX(1.0204);transform-origin:0 0;-webkit-text-stroke:0.05px #333;">Демо пользователь</div>
<div class="t" style="left:1162.17px;top:540.32px;font-size:16.40px;line-height:20px;font-weight:400;color:#333;-webkit-text-stroke:0.05px #333;transform:scaleX(0.92);transform-origin:0 0;">19 503</div>
<svg style="position:absolute;left:1250px;top:530px" width="38" height="43" viewBox="0 0 38 43"><g><rect x="0" y="0" width="38" height="43" rx="3" fill="url(#gr)"/><rect x="0" y="0" width="17" height="43" rx="3" fill="#141416"/><rect x="16" y="0" width="4" height="43" fill="#c8101e"/><rect x="1.3" y="5" width="14.5" height="32" fill="url(#gw)"/><path d="M1.3 5h14.5v7c-5 1-10 4-14.5 9z" fill="#f09a3a" opacity=".55"/><rect x="20.5" y="2.2" width="5.5" height="3.2" rx="1.5" fill="#3a080c"/><circle cx="28" cy="13" r="1.6" fill="#f3d0d0"/><path d="M22 3l14 20v-20z" fill="#e8323e" opacity=".35"/></g></svg>
<div class="t" style="left:1329.19px;top:529.73px;font-size:15.20px;line-height:19px;font-weight:400;color:#333;transform:scaleX(0.9387);transform-origin:0 0;">Смартфон Apple iPhone 8 Plus 64GB (PRODUCT) RED</div>
<div class="t" style="left:1329.03px;top:552.73px;font-size:15.20px;line-height:19px;font-weight:400;color:#333;transform:scaleX(0.9536);transform-origin:0 0;">(MRT72), MRT72</div>
<div class="t" style="left:1743.54px;top:541.23px;font-size:15.20px;line-height:19px;font-weight:400;color:#333;transform:scaleX(0.9559);transform-origin:0 0;-webkit-text-stroke:0.05px #333;">По телефону</div>
<div style="position:absolute;left:375px;top:645px;width:1499px;height:1px;background:#dedede"></div>
<div style="position:absolute;left:383px;top:603px;width:22px;height:23px;box-sizing:border-box;border:2px solid #5b6a77;border-radius:3px"></div>
<div class="t" style="left:431.65px;top:602.82px;font-size:16.40px;line-height:20px;font-weight:400;color:#40609a;transform:scaleX(0.9344);transform-origin:0 0;-webkit-text-stroke:0.05px #40609a;">132</div>
<div style="position:absolute;left:516px;top:596px;width:256px;height:35px;background:#4d85c6;border-radius:3px"></div>
<div class="t" style="left:527.40px;top:603.80px;font-size:15.00px;line-height:19px;font-weight:400;color:#fff;-webkit-text-stroke:0.15px #fff;transform:scaleX(1.02);transform-origin:0 0;">Новый</div>
<div class="t" style="left:808.85px;top:602.82px;font-size:16.40px;line-height:20px;font-weight:400;color:#333;transform:scaleX(0.9146);transform-origin:0 0;-webkit-text-stroke:0.05px #333;">22.03.2022 09:10</div>
<div class="t" style="left:984.02px;top:603.73px;font-size:15.20px;line-height:19px;font-weight:400;color:#333;transform:scaleX(1.0204);transform-origin:0 0;-webkit-text-stroke:0.05px #333;">Демо пользователь</div>
<div class="t" style="left:1162.74px;top:602.82px;font-size:16.40px;line-height:20px;font-weight:400;color:#333;-webkit-text-stroke:0.05px #333;transform:scaleX(0.92);transform-origin:0 0;">57 401</div>
<svg style="position:absolute;left:1249px;top:595px" width="42" height="38" viewBox="0 0 42 38"><g><path d="M0 0H42L39.6 13.2H2.4Z" fill="#26272c"/><path d="M1.6 1.2H40.4L38.5 12.2H3.5Z" fill="url(#gm)"/><path d="M2.6 13.2H39.4L39.8 38H2.2Z" fill="#6c6f75"/><rect x="6.5" y="15.8" width="29" height="11.2" fill="#33353a"/><rect x="14" y="29" width="14" height="7.6" fill="#7a7d83"/></g></svg>
<div class="t" style="left:1328.70px;top:592.23px;font-size:15.20px;line-height:19px;font-weight:400;color:#333;transform:scaleX(0.9840);transform-origin:0 0;">Ноутбук Apple MacBook Pro 15 with Touch Bar Space</div>
<div class="t" style="left:1329.17px;top:615.23px;font-size:15.20px;line-height:19px;font-weight:400;color:#333;transform:scaleX(0.9578);transform-origin:0 0;">Gray (MR932) 2018, MR932</div>
<div class="t" style="left:1743.54px;top:603.73px;font-size:15.20px;line-height:19px;font-weight:400;color:#333;transform:scaleX(0.9559);transform-origin:0 0;-webkit-text-stroke:0.05px #333;">По телефону</div>
<div style="position:absolute;left:375px;top:730px;width:1499px;height:1px;background:#dedede"></div>
<div style="position:absolute;left:383px;top:676px;width:22px;height:23px;box-sizing:border-box;border:2px solid #5b6a77;border-radius:3px"></div>
<div class="t" style="left:431.65px;top:676.32px;font-size:16.40px;line-height:20px;font-weight:400;color:#40609a;transform:scaleX(0.9314);transform-origin:0 0;-webkit-text-stroke:0.05px #40609a;">131</div>
<div style="position:absolute;left:516px;top:670px;width:256px;height:35px;background:#da403a;border-radius:3px"></div>
<div class="t" style="left:527.40px;top:677.30px;font-size:15.00px;line-height:19px;font-weight:400;color:#fff;-webkit-text-stroke:0.15px #fff;transform:scaleX(1.02);transform-origin:0 0;">Не дозвонились</div>
<div class="t" style="left:808.85px;top:676.32px;font-size:16.40px;line-height:20px;font-weight:400;color:#333;transform:scaleX(0.9146);transform-origin:0 0;-webkit-text-stroke:0.05px #333;">22.03.2022 09:10</div>
<div class="t" style="left:984.02px;top:677.23px;font-size:15.20px;line-height:19px;font-weight:400;color:#333;transform:scaleX(1.0204);transform-origin:0 0;-webkit-text-stroke:0.05px #333;">Демо пользователь</div>
<div class="t" style="left:1162.17px;top:676.32px;font-size:16.40px;line-height:20px;font-weight:400;color:#333;-webkit-text-stroke:0.05px #333;transform:scaleX(0.92);transform-origin:0 0;">11 971</div>
<svg style="position:absolute;left:1256px;top:671px" width="28" height="33" viewBox="0 0 28 33"><g><rect x="5" y="0" width="23" height="33" rx="10" fill="#efd3c9"/><rect x="16.5" y="8" width="5" height="17" rx="2.5" fill="#fbf3f0"/><rect x="0" y="6" width="15.6" height="20.4" rx="3.2" fill="#d6b19a"/><rect x="1.2" y="7.2" width="13.2" height="18" rx="2.4" fill="#2d2628"/><circle cx="5" cy="11.5" r="1.3" fill="#b0705a"/><circle cx="10.5" cy="12" r="1.1" fill="#a89a80"/><circle cx="6" cy="19.5" r="1.2" fill="#5d6f90"/><path d="M8 16l3-2" stroke="#9a8f8a" stroke-width=".8"/><rect x="15.6" y="12" width="1.6" height="3.4" fill="#d9b7a2"/><circle cx="24.5" cy="17" r="1" fill="#d8ada0"/></g></svg>
<div class="t" style="left:1329.16px;top:654.23px;font-size:15.20px;line-height:19px;font-weight:400;color:#333;transform:scaleX(0.9702);transform-origin:0 0;">Смарт-часы Apple Watch Series 4 GPS 44mm Gold</div>
<div class="t" style="left:1329.90px;top:677.23px;font-size:15.20px;line-height:19px;font-weight:400;color:#333;transform:scaleX(0.9722);transform-origin:0 0;">Aluminum Case with Pink Sand Sport Band (MU6F2),</div>
<div class="t" style="left:1328.71px;top:700.23px;font-size:15.20px;line-height:19px;font-weight:400;color:#333;transform:scaleX(0.9748);transform-origin:0 0;">MU6F2</div>
<div class="t" style="left:1743.54px;top:677.23px;font-size:15.20px;line-height:19px;font-weight:400;color:#333;transform:scaleX(0.9559);transform-origin:0 0;-webkit-text-stroke:0.05px #333;">По телефону</div>
<div style="position:absolute;left:375px;top:793px;width:1499px;height:2px;background:#e2e2e2"></div>
<div style="position:absolute;left:383px;top:750px;width:22px;height:23px;box-sizing:border-box;border:2px solid #5b6a77;border-radius:3px"></div>
<div class="t" style="left:431.66px;top:750.32px;font-size:16.40px;line-height:20px;font-weight:400;color:#40609a;transform:scaleX(0.9254);transform-origin:0 0;-webkit-text-stroke:0.05px #40609a;">130</div>
<div style="position:absolute;left:516px;top:744px;width:256px;height:35px;background:#6b2d3c;border-radius:3px"></div>
<div class="t" style="left:527.93px;top:751.30px;font-size:15.00px;line-height:19px;font-weight:400;color:#fff;-webkit-text-stroke:0.15px #fff;transform:scaleX(1.02);transform-origin:0 0;">Обрабатывается</div>
<div class="t" style="left:808.85px;top:750.32px;font-size:16.40px;line-height:20px;font-weight:400;color:#333;transform:scaleX(0.9146);transform-origin:0 0;-webkit-text-stroke:0.05px #333;">22.03.2022 09:10</div>
<div class="t" style="left:984.02px;top:751.23px;font-size:15.20px;line-height:19px;font-weight:400;color:#333;transform:scaleX(1.0204);transform-origin:0 0;-webkit-text-stroke:0.05px #333;">Демо пользователь</div>
<div class="t" style="left:1162.17px;top:750.32px;font-size:16.40px;line-height:20px;font-weight:400;color:#333;-webkit-text-stroke:0.05px #333;transform:scaleX(0.92);transform-origin:0 0;">19 503</div>
<svg style="position:absolute;left:1250px;top:740px" width="38" height="43" viewBox="0 0 38 43"><g><rect x="0" y="0" width="38" height="43" rx="3" fill="url(#gr)"/><rect x="0" y="0" width="17" height="43" rx="3" fill="#141416"/><rect x="16" y="0" width="4" height="43" fill="#c8101e"/><rect x="1.3" y="5" width="14.5" height="32" fill="url(#gw)"/><path d="M1.3 5h14.5v7c-5 1-10 4-14.5 9z" fill="#f09a3a" opacity=".55"/><rect x="20.5" y="2.2" width="5.5" height="3.2" rx="1.5" fill="#3a080c"/><circle cx="28" cy="13" r="1.6" fill="#f3d0d0"/><path d="M22 3l14 20v-20z" fill="#e8323e" opacity=".35"/></g></svg>
<div class="t" style="left:1329.19px;top:739.73px;font-size:15.20px;line-height:19px;font-weight:400;color:#333;transform:scaleX(0.9387);transform-origin:0 0;">Смартфон Apple iPhone 8 Plus 64GB (PRODUCT) RED</div>
<div class="t" style="left:1329.03px;top:762.73px;font-size:15.20px;line-height:19px;font-weight:400;color:#333;transform:scaleX(0.9536);transform-origin:0 0;">(MRT72), MRT72</div>
<div class="t" style="left:1743.54px;top:751.23px;font-size:15.20px;line-height:19px;font-weight:400;color:#333;transform:scaleX(0.9559);transform-origin:0 0;-webkit-text-stroke:0.05px #333;">По телефону</div>
<div style="position:absolute;left:375px;top:855px;width:1499px;height:1px;background:#dedede"></div>
<div style="position:absolute;left:383px;top:813px;width:22px;height:23px;box-sizing:border-box;border:2px solid #5b6a77;border-radius:3px"></div>
<div class="t" style="left:431.65px;top:812.82px;font-size:16.40px;line-height:20px;font-weight:400;color:#40609a;transform:scaleX(0.9314);transform-origin:0 0;-webkit-text-stroke:0.05px #40609a;">129</div>
<div style="position:absolute;left:516px;top:806px;width:256px;height:35px;background:#888b8a;border-radius:3px"></div>
<div class="t" style="left:528.08px;top:813.80px;font-size:15.00px;line-height:19px;font-weight:400;color:#fff;-webkit-text-stroke:0.15px #fff;transform:scaleX(1.02);transform-origin:0 0;">Завершен</div>
<div class="t" style="left:808.85px;top:812.82px;font-size:16.40px;line-height:20px;font-weight:400;color:#333;transform:scaleX(0.9146);transform-origin:0 0;-webkit-text-stroke:0.05px #333;">22.03.2022 09:10</div>
<div class="t" style="left:984.02px;top:813.73px;font-size:15.20px;line-height:19px;font-weight:400;color:#333;transform:scaleX(1.0204);transform-origin:0 0;-webkit-text-stroke:0.05px #333;">Демо пользователь</div>
<div class="t" style="left:1162.58px;top:812.82px;font-size:16.40px;line-height:20px;font-weight:400;color:#333;-webkit-text-stroke:0.05px #333;transform:scaleX(0.92);transform-origin:0 0;">2 018</div>
<svg style="position:absolute;left:1250px;top:808px" width="40" height="32" viewBox="0 0 40 32"><g><path d="M0.5 31.4V4.5C0.5 1.8 1.8 0.4 4 0.4H36c2.2 0 3.5 1.4 3.5 4.1V31.4z" fill="url(#gs)"/><path d="M0.5 4.5C0.5 1.8 1.8.4 4 .4h32c2.2 0 3.5 1.4 3.5 4.1v1.4H.5z" fill="#8d5128" opacity=".6"/><path d="M13 6v24M26 6v24" stroke="#a9652f" stroke-width=".8" opacity=".6"/></g></svg>
<div class="t" style="left:1328.79px;top:802.23px;font-size:15.20px;line-height:19px;font-weight:400;color:#333;transform:scaleX(0.9778);transform-origin:0 0;">Чехол для ноутбука Decoded Leather Slim Sleeve with</div>
<div class="t" style="left:1329.46px;top:825.23px;font-size:15.20px;line-height:19px;font-weight:400;color:#333;transform:scaleX(0.9639);transform-origin:0 0;">Zipper for MacBook 12 Brown (D4SS12BN), D4SS12BN</div>
<div class="t" style="left:1743.54px;top:813.73px;font-size:15.20px;line-height:19px;font-weight:400;color:#333;transform:scaleX(0.9559);transform-origin:0 0;-webkit-text-stroke:0.05px #333;">По телефону</div>
<div style="position:absolute;left:383px;top:866px;width:22px;height:22px;box-sizing:border-box;border:2px solid #58697a;border-radius:3px"></div>
</body></html>
